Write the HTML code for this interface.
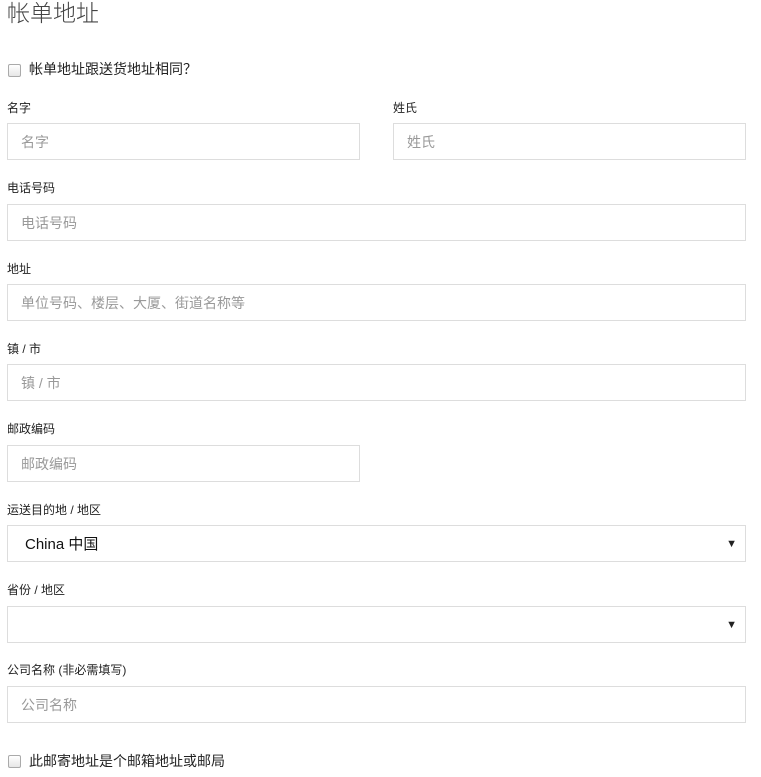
<!DOCTYPE html>
<html><head><meta charset="utf-8"><style>
body{margin:0;width:761px;height:777px;background:#fff;font-family:"Liberation Sans","Noto Sans CJK SC",sans-serif;position:relative;overflow:hidden;color:#222}
.a{position:absolute;white-space:nowrap}
.t{font-size:23px;left:7px;top:-2px;line-height:30px;color:#444;font-weight:300}
.l{font-size:12px;line-height:16px;color:#222}
.b{position:absolute;border:1px solid #ddd;box-sizing:border-box;height:37px;font-size:14px;color:#999;padding-left:13px;line-height:37px}
.cb{position:absolute;width:11px;height:11px;border:1px solid #aaa;border-radius:2px;background:linear-gradient(#fff,#e6e6e6);left:8px}
.ct{font-size:14px;left:29px;line-height:18px;color:#222}
.ar{position:absolute;right:8px;top:0;font-size:11px;color:#222;line-height:37px}
</style></head><body>
<div class="a t">帐单地址</div>
<div class="cb" style="top:64px"></div>
<div class="a ct" style="top:60px">帐单地址跟送货地址相同？</div>

<div class="a l" style="left:7px;top:100px">名字</div>
<div class="a l" style="left:393px;top:100px">姓氏</div>
<div class="b" style="left:7px;top:123px;width:353px">名字</div>
<div class="b" style="left:393px;top:123px;width:353px">姓氏</div>

<div class="a l" style="left:7px;top:180px">电话号码</div>
<div class="b" style="left:7px;top:204px;width:739px">电话号码</div>

<div class="a l" style="left:7px;top:261px">地址</div>
<div class="b" style="left:7px;top:284px;width:739px">单位号码、楼层、大厦、街道名称等</div>

<div class="a l" style="left:7px;top:341px">镇 / 市</div>
<div class="b" style="left:7px;top:364px;width:739px">镇 / 市</div>

<div class="a l" style="left:7px;top:421px">邮政编码</div>
<div class="b" style="left:7px;top:445px;width:353px">邮政编码</div>

<div class="a l" style="left:7px;top:502px">运送目的地 / 地区</div>
<div class="b" style="left:7px;top:525px;width:739px;color:#111;font-size:15px;padding-left:17px">China 中国<span class="ar">▼</span></div>

<div class="a l" style="left:7px;top:582px">省份 / 地区</div>
<div class="b" style="left:7px;top:606px;width:739px"><span class="ar">▼</span></div>

<div class="a l" style="left:7px;top:662px">公司名称 (非必需填写)</div>
<div class="b" style="left:7px;top:686px;width:739px">公司名称</div>

<div class="cb" style="top:755px"></div>
<div class="a ct" style="top:752px">此邮寄地址是个邮箱地址或邮局</div>
</body></html>
